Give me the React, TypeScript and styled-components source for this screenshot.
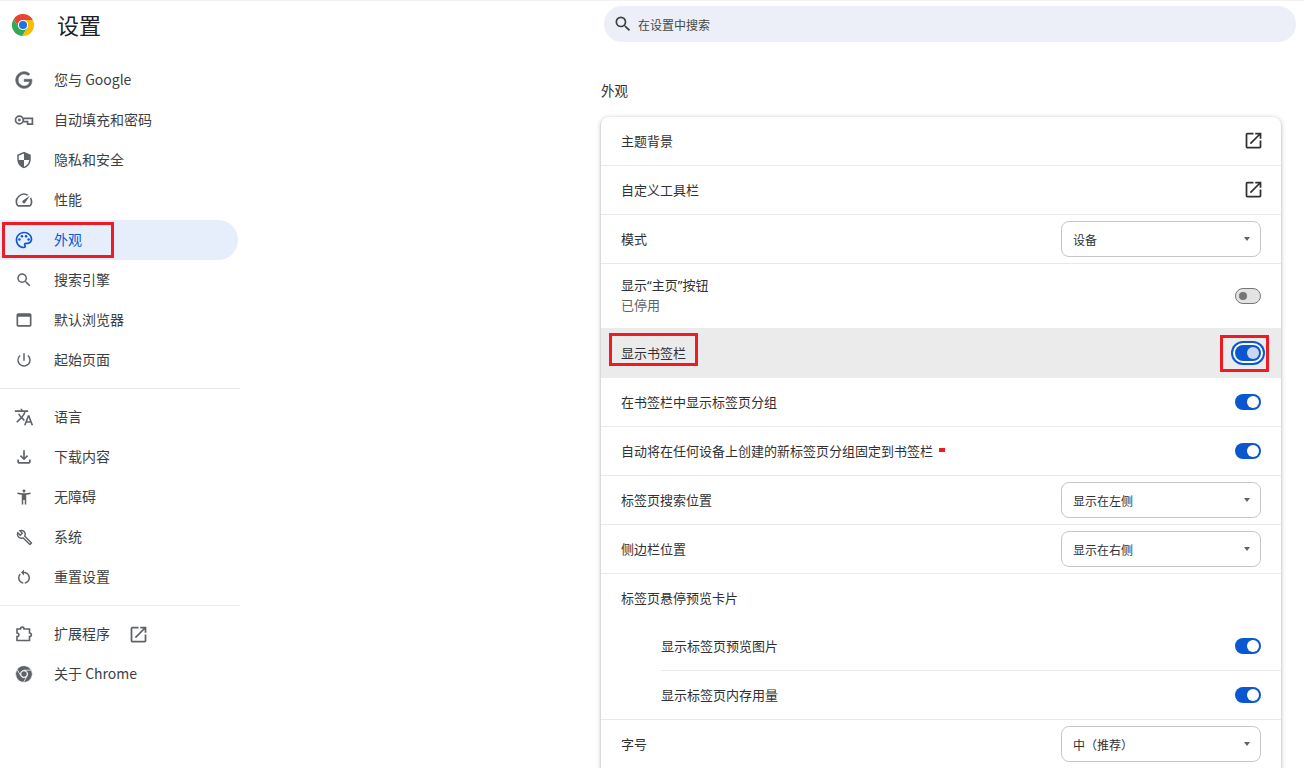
import * as React from 'react'
import styled, { createGlobalStyle } from 'styled-components'
import {
  MdAccessibilityNew,
  MdOutlineBuild,
  MdOutlinePalette,
  MdOutlineSpeed,
  MdOpenInNew,
  MdPowerSettingsNew,
  MdRestartAlt,
  MdSearch,
  MdSecurity,
  MdTranslate,
  MdWebAsset,
  MdOutlineFileDownload,
} from 'react-icons/md'

const GlobalStyle = createGlobalStyle`
  html, body {
    margin: 0;
    height: 100%;
    overflow: hidden;
    background: #fff;
  }
  body {
    font-family: "Noto Sans CJK SC", "Noto Sans", sans-serif;
    color: #1f1f1f;
    text-spacing-trim: space-all;
  }
`

const Page = styled.div`
  display: grid;
  grid-template-columns: 240px 1fr;
  height: 768px;
  box-sizing: border-box;
  border-top: 1px solid #f2f2f2;
  overflow: hidden;
`

const Sidebar = styled.nav`
  display: flex;
  flex-direction: column;
`

const Brand = styled.div`
  display: flex;
  align-items: center;
  gap: 22px;
  height: 47px;
  padding-left: 11px;
  margin-bottom: 12px;
`

const Title = styled.h1`
  margin: 0 0 1px;
  font-size: 22px;
  font-weight: 400;
  line-height: 1;
  color: #202124;
`

const NavItem = styled.div<{ $active?: boolean }>`
  position: relative;
  display: flex;
  align-items: center;
  gap: 20px;
  width: 238px;
  height: 40px;
  box-sizing: border-box;
  padding: 0 0 2px 14px;
  font-size: 14px;
  color: ${(p) => (p.$active ? '#0b57d0' : '#3c4043')};
  background: ${(p) => (p.$active ? '#e6eefb' : 'transparent')};
  border-radius: 0 20px 20px 0;

  svg {
    flex: none;
    color: ${(p) => (p.$active ? '#0b57d0' : '#5f6368')};
  }
`

const IconSlot = styled.span`
  display: flex;
  align-items: center;
  justify-content: center;
  flex: none;
  width: 20px;
  height: 20px;
  margin-top: 2px;
`

const NavExternal = styled.span`
  display: flex;
  margin: 2px 0 0 -2px;
`

const NavDivider = styled.hr`
  width: 240px;
  margin: 8px 0;
  border: 0;
  border-top: 1px solid #e9e9e9;
`

const Annotation = styled.div`
  position: absolute;
  box-sizing: border-box;
  border: 3px solid #ed1c24;
  pointer-events: none;
`

const NavMark = styled(Annotation)`
  top: 2px;
  left: 2px;
  width: 112px;
  height: 36px;
`

const LabelMark = styled(Annotation)`
  top: 5px;
  left: 8px;
  width: 89px;
  height: 33px;
`

const ToggleMark = styled(Annotation)`
  top: 7px;
  right: 12px;
  width: 49px;
  height: 37px;
`

const Main = styled.main`
  display: flex;
  flex-direction: column;
  padding-top: 5px;
  padding-left: 361px;
  padding-right: 23px;
`

const SearchBar = styled.div`
  display: flex;
  align-items: center;
  gap: 5px;
  height: 36px;
  margin-left: 3px;
  margin-right: -15px;
  padding-left: 9px;
  border-radius: 18px;
  background: #eceff7;
  font-size: 12px;
  color: #474747;

  svg {
    color: #3c4043;
  }
`

const SectionTitle = styled.h2`
  margin: 38px 0 17px;
  font-size: 13.5px;
  font-weight: 400;
  line-height: 20px;
  color: #303134;
`

const Card = styled.section`
  border-radius: 8px 8px 0 0;
  background: #fff;
  box-shadow: 0 1px 2px rgba(60, 64, 67, 0.3), 0 1px 4px 1px rgba(60, 64, 67, 0.2);
`

const Row = styled.div<{ $tall?: boolean; $hover?: boolean; $plain?: boolean }>`
  position: relative;
  display: flex;
  align-items: center;
  justify-content: space-between;
  box-sizing: border-box;
  height: ${(p) => (p.$tall ? '64px' : p.$hover ? '50px' : p.$plain ? '48px' : '49px')};
  padding: 0 20px 2px;
  font-size: 13px;
  color: #303134;
  background: ${(p) => (p.$hover ? '#ebebeb' : 'transparent')};
  border-bottom: ${(p) => (p.$tall || p.$hover || p.$plain ? '0' : '1px solid #e9e9e9')};
`

const SubRow = styled.div`
  display: flex;
  align-items: center;
  justify-content: space-between;
  box-sizing: border-box;
  height: 49px;
  margin-left: 60px;
  padding: 0 20px 2px 0;
  font-size: 13px;
  color: #303134;
  border-bottom: 1px solid #e9e9e9;
`

const LastSubRow = styled(SubRow)`
  margin-left: 0;
  padding-left: 60px;
`

const LabelStack = styled.div`
  display: flex;
  flex-direction: column;
  gap: 2px;
  line-height: 18px;
`

const Secondary = styled.span`
  color: #5f6368;
`

// full-width CJK quotes are too wide here, the reference has the narrow latin ones
const Quote = styled.span`
  font-family: "Noto Sans", sans-serif;
`

const Flagged = styled.span`
  display: inline-flex;
  align-items: center;
  gap: 6px;
`

const RedDash = styled.i`
  width: 6px;
  height: 4px;
  background: #ed1c24;
`

const ExternalIcon = styled(MdOpenInNew)`
  margin: 1px -3px 0 0;
  color: #303134;
`

const Select = styled.div`
  display: flex;
  align-items: center;
  justify-content: space-between;
  width: 200px;
  height: 36px;
  margin-top: 2px;
  box-sizing: border-box;
  padding: 0 10px 0 11px;
  border: 1px solid #c7c7c7;
  border-radius: 8px;
  background: #fff;
  font-size: 12px;
  color: #303134;
`

const Caret = styled.i`
  width: 0;
  height: 0;
  border-left: 3.5px solid transparent;
  border-right: 3.5px solid transparent;
  border-top: 4px solid #5f6368;
  margin-top: -1px;
`

const Toggle = styled.div<{ $on?: boolean; $focus?: boolean }>`
  display: flex;
  align-items: center;
  justify-content: ${(p) => (p.$on ? 'flex-end' : 'flex-start')};
  width: 26px;
  height: 16px;
  margin-top: 2px;
  box-sizing: border-box;
  padding: ${(p) => (p.$on ? '0 2px' : '0 3px')};
  border-radius: 8px;
  background: ${(p) => (p.$on ? '#0b57d0' : '#e3e3e3')};
  border: ${(p) => (p.$on ? '0' : '1px solid #747775')};
  box-shadow: ${(p) => (p.$focus ? '0 0 0 2px #fff, 0 0 0 4px #0b57d0' : 'none')};
`

const Knob = styled.span<{ $on?: boolean; $focus?: boolean }>`
  width: ${(p) => (p.$on ? '12px' : '8px')};
  height: ${(p) => (p.$on ? '12px' : '8px')};
  border-radius: 50%;
  background: ${(p) => (p.$focus ? '#c9d7f3' : p.$on ? '#fff' : '#747775')};
`

const Switch = ({ on, focus }: { on?: boolean; focus?: boolean }) => (
  <Toggle $on={on} $focus={focus}>
    <Knob $on={on} $focus={focus} />
  </Toggle>
)

// three sectors tangent to the inner circle, shared by the logo and the grey nav icon
const sectors = {
  top: 'M21.8 7A11 11 0 0 0 2.77 6L7.67 14.5A5 5 0 0 1 12 7Z',
  left: 'M2.77 6A11 11 0 0 0 11.43 23L16.33 14.5A5 5 0 0 1 7.67 14.5Z',
  right: 'M11.43 23A11 11 0 0 0 21.8 7H12A5 5 0 0 1 16.33 14.5Z',
}

const ChromeLogo = () => (
  <svg width={24} height={24} viewBox="0 0 24 24">
    <path d={sectors.top} fill="#ea4335" />
    <path d={sectors.left} fill="#34a853" />
    <path d={sectors.right} fill="#fbbc04" />
    <circle cx="12" cy="12" r="5" fill="#fff" />
    <circle cx="12" cy="12" r="4" fill="#1a73e8" />
  </svg>
)

const ChromeGrey = () => (
  <svg width={18} height={18} viewBox="0 0 24 24">
    <g fill="#5f6368" stroke="#fff" strokeWidth="0.7">
      <path d={sectors.top} />
      <path d={sectors.left} />
      <path d={sectors.right} />
    </g>
    <circle cx="12" cy="12" r="3.6" fill="#5f6368" />
  </svg>
)

const GoogleG = () => (
  <svg width={20} height={20} viewBox="0 0 24 24" fill="currentColor" stroke="currentColor" strokeWidth="0.7">
    <path d="M21.35 11.1h-9.17v2.73h6.51c-.33 3.81-3.5 5.44-6.5 5.44C8.36 19.27 5 16.25 5 12c0-4.1 3.2-7.27 7.2-7.27 3.09 0 4.9 1.97 4.9 1.97L19 4.72S16.56 2 12.1 2C6.42 2 2.03 6.8 2.03 12c0 5.05 4.13 10 10.22 10 5.35 0 9.25-3.67 9.25-9.09 0-1.15-.15-1.81-.15-1.81z" />
  </svg>
)

const KeyIcon = () => (
  <svg width={20} height={20} viewBox="0 0 20 20" fill="none" stroke="currentColor" strokeWidth="1.7">
    <circle cx="5.4" cy="10" r="3.9" />
    <circle cx="5.4" cy="10" r="1.4" fill="currentColor" stroke="none" />
    <path d="M9.2 8.4H18.4V14.2H13.6V11.6H9.2" />
  </svg>
)

const PuzzleIcon = () => (
  <svg width={20} height={20} viewBox="0 0 20 20" fill="none" stroke="currentColor" strokeWidth="1.6">
    <path d="M3 5H6.5C6.5 2.5 10 2.5 10 5H15.5V9C18 9 18 12.5 15.5 12.5V16.5H3V12.5C5.5 12.5 5.5 9 3 9Z" />
  </svg>
)

const NavRow = ({ icon, label, active, children }: {
  icon: React.ReactNode
  label: string
  active?: boolean
  children?: React.ReactNode
}) => (
  <NavItem $active={active}>
    <IconSlot>{icon}</IconSlot>
    {label}
    {children}
  </NavItem>
)

const App = () => (
  <Page>
    <GlobalStyle />
    <Sidebar>
      <Brand>
        <ChromeLogo />
        <Title>设置</Title>
      </Brand>
      <NavRow icon={<GoogleG />} label="您与 Google" />
      <NavRow icon={<KeyIcon />} label="自动填充和密码" />
      <NavRow icon={<MdSecurity size={18} />} label="隐私和安全" />
      <NavRow icon={<MdOutlineSpeed size={20} />} label="性能" />
      <NavRow icon={<MdOutlinePalette size={20} />} label="外观" active>
        <NavMark />
      </NavRow>
      <NavRow icon={<MdSearch size={18} />} label="搜索引擎" />
      <NavRow icon={<MdWebAsset size={20} />} label="默认浏览器" />
      <NavRow icon={<MdPowerSettingsNew size={18} />} label="起始页面" />
      <NavDivider />
      <NavRow icon={<MdTranslate size={20} />} label="语言" />
      <NavRow icon={<MdOutlineFileDownload size={20} />} label="下载内容" />
      <NavRow icon={<MdAccessibilityNew size={18} />} label="无障碍" />
      <NavRow icon={<MdOutlineBuild size={17} />} label="系统" />
      <NavRow icon={<MdRestartAlt size={18} />} label="重置设置" />
      <NavDivider />
      <NavRow icon={<PuzzleIcon />} label="扩展程序">
        <NavExternal><MdOpenInNew size={21} /></NavExternal>
      </NavRow>
      <NavRow icon={<ChromeGrey />} label="关于 Chrome" />
    </Sidebar>

    <Main>
      <SearchBar>
        <MdSearch size={20} />
        <span>在设置中搜索</span>
      </SearchBar>
      <SectionTitle>外观</SectionTitle>
      <Card>
        <Row>主题背景<ExternalIcon size={21} /></Row>
        <Row>自定义工具栏<ExternalIcon size={21} /></Row>
        <Row>模式<Select>设备<Caret /></Select></Row>
        <Row $tall>
          <LabelStack>
            <span>显示<Quote>“</Quote>主页<Quote>”</Quote>按钮</span>
            <Secondary>已停用</Secondary>
          </LabelStack>
          <Switch />
        </Row>
        <Row $hover>
          显示书签栏
          <Switch on focus />
          <LabelMark />
          <ToggleMark />
        </Row>
        <Row>在书签栏中显示标签页分组<Switch on /></Row>
        <Row>
          <Flagged>自动将在任何设备上创建的新标签页分组固定到书签栏<RedDash /></Flagged>
          <Switch on />
        </Row>
        <Row>标签页搜索位置<Select>显示在左侧<Caret /></Select></Row>
        <Row>侧边栏位置<Select>显示在右侧<Caret /></Select></Row>
        <Row $plain>标签页悬停预览卡片</Row>
        <SubRow>显示标签页预览图片<Switch on /></SubRow>
        <LastSubRow>显示标签页内存用量<Switch on /></LastSubRow>
        <Row>字号<Select>中（推荐）<Caret /></Select></Row>
      </Card>
    </Main>
  </Page>
)

export default App
